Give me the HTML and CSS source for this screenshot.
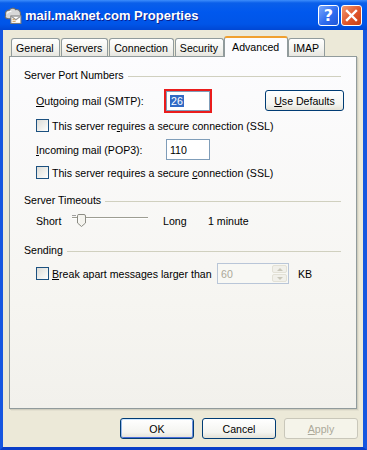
FILE: index.html
```html
<!DOCTYPE html>
<html lang="en">
<head>
  <meta charset="UTF-8">
  <title>mail.maknet.com Properties</title>
  <link rel="stylesheet" href="styles.css">
</head>
<body>

<div class="window">

  <!-- Title bar -->
  <div class="titlebar">
    <svg class="app-icon" width="18" height="17" viewBox="0 0 17 16">
      <path d="M1.5 8 C0.5 5 2.5 2.5 5 3 C6 0.5 10 0.5 11 2.5 C13.5 2 16 4 15.5 7 C16.5 8.5 15.5 11 13 11 L4 11 C1.5 11 0.5 9.5 1.5 8 Z" fill="#d8d8d8" stroke="#6b6b6b"/>
      <path d="M3 6 C4 4.5 6 4 7 4.5" fill="none" stroke="#fff"/>
      <rect x="6.5" y="8.5" width="9.5" height="7" fill="#fff" stroke="#7a7a7a"/>
      <path d="M6.5 8.5 L11.25 12 L16 8.5" fill="none" stroke="#9a9a9a"/>
      <path d="M8 11.5 L10 11.5 M8 13.5 L11 13.5" stroke="#c89040"/>
    </svg>
    <span class="title">mail.maknet.com Properties</span>
    <div class="caption-buttons">
      <span class="cap-btn help">?</span>
      <span class="cap-btn close">
        <svg width="13" height="13" viewBox="0 0 13 13">
          <path d="M2 2 L11 11 M11 2 L2 11" stroke="#fff" stroke-width="2.4" stroke-linecap="square"/>
        </svg>
      </span>
    </div>
  </div>

  <div class="frame">

    <!-- Tabs -->
    <div class="tabs">
      <span class="tab">General</span>
      <span class="tab">Servers</span>
      <span class="tab">Connection</span>
      <span class="tab">Security</span>
      <span class="tab active">Advanced</span>
      <span class="tab">IMAP</span>
    </div>

    <div class="panel">

      <div class="group-title"><span>Server Port Numbers</span></div>

      <div class="row port-row">
        <span class="field-label"><u>O</u>utgoing mail (SMTP):</span>
        <span class="textbox marked"><span class="sel">26</span></span>
        <button class="xp-btn defaults"><u>U</u>se Defaults</button>
      </div>

      <div class="row check-row">
        <span class="checkbox"></span>
        <span class="check-label">This server re<u>q</u>uires a secure connection (SSL)</span>
      </div>

      <div class="row port-row second">
        <span class="field-label"><u>I</u>ncoming mail (POP3):</span>
        <span class="textbox">110</span>
      </div>

      <div class="row check-row second">
        <span class="checkbox"></span>
        <span class="check-label">This server requires a secure <u>c</u>onnection (SSL)</span>
      </div>

      <div class="group-title timeouts"><span>Server Timeouts</span></div>

      <div class="row slider-row">
        <span class="short">Short</span>
        <svg class="slider" width="80" height="14" viewBox="0 0 80 14">
          <path d="M2 1.5 H6" stroke="#a0a0a0"/>
          <path d="M2 3.5 H78" stroke="#9d9d92"/>
          <path d="M2 4.5 H78" stroke="#ffffff"/>
          <path d="M7.5 1.5 Q7.5 0.5 9 0.5 H14 Q15.5 0.5 15.5 2 V9 L11.5 12.5 L7.5 9 Z" fill="#f4f3ee" stroke="#8c8c84"/>
          <path d="M9 8 V3" stroke="#ffffff"/>
        </svg>
        <span class="long">Long</span>
        <span>1 minute</span>
      </div>

      <div class="group-title sending"><span>Sending</span></div>

      <div class="row break-row">
        <span class="checkbox focused"></span>
        <span class="check-label break-label"><u>B</u>reak apart messages larger than</span>
        <span class="spinner">
          <span class="spin-value">60</span>
          <span class="spin-btns">
            <span class="spin up"></span>
            <span class="spin down"></span>
          </span>
        </span>
        <span class="unit">KB</span>
      </div>

    </div>

    <!-- Dialog buttons -->
    <div class="buttons">
      <button class="xp-btn default">OK</button>
      <button class="xp-btn">Cancel</button>
      <button class="xp-btn disabled"><u>A</u>pply</button>
    </div>

  </div>
</div>

</body>
</html>
```

FILE: styles.css
```css
body {
  margin: 0;
  font-family: "Liberation Sans", Arial, sans-serif;
  font-size: 10.6px;
  color: #000;
  background: #fff;
}

.window {
  width: 367px;
  height: 450px;
  display: flex;
  flex-direction: column;
}

/* Title bar */

.titlebar {
  height: 30px;
  box-sizing: border-box;
  display: flex;
  align-items: center;
  padding: 0 5px 0 4px;
  background: linear-gradient(#3d8dfb 0, #0a5fea 3px, #0058ee 40%, #0055e8 80%, #0047d4 100%);
}

.app-icon {
  display: block;
  margin-top: 1px;
}

.title {
  margin-left: 3px;
  color: #fff;
  font-weight: bold;
  font-size: 13px;
  text-shadow: 1px 1px 0 #0a1f8f;
}

.caption-buttons {
  margin-left: auto;
  display: flex;
  gap: 2px;
}

.cap-btn {
  width: 21px;
  height: 21px;
  box-sizing: border-box;
  border: 1px solid #fff;
  border-radius: 3px;
  display: flex;
  align-items: center;
  justify-content: center;
  color: #fff;
}

.help {
  background: linear-gradient(135deg, #7aa8fb, #2f6cf0 55%, #1f56d8);
  font-weight: bold;
  font-size: 16px;
  font-family: "DejaVu Sans", sans-serif;
}

.close {
  background: linear-gradient(135deg, #f29a72, #e0552a 55%, #c93f14);
}

/* Window body */

.frame {
  flex: 1;
  display: flex;
  flex-direction: column;
  background: #ece9d8;
  border-left: 3px solid #1656e0;
  border-right: 4px solid #1656e0;
  border-bottom: 3px solid #0a3ec8;
  padding: 6px 6px 0 6px;
}

.tabs {
  display: flex;
  align-items: flex-start;
  height: 21px;
  margin: 0 0 -1px 2px;
  gap: 1px;
  position: relative;
  z-index: 1;
}

.tab {
  height: 18px;
  box-sizing: border-box;
  margin-top: 2px;
  padding: 0 5px 0 4px;
  display: flex;
  align-items: center;
  border: 1px solid #919b9c;
  border-bottom: none;
  border-radius: 3px 3px 0 0;
  background: linear-gradient(#ffffff, #f3f3ef 60%, #e7e6e0);
}

.tab.active {
  height: 21px;
  margin: 0 -1px;
  padding: 0 8px 2px 7px;
  border-top: 2px solid #f0a030;
  background: #fcfcfe;
}

.panel {
  height: 353px;
  box-sizing: border-box;
  border: 1px solid #919b9c;
  box-shadow: 1px 1px 0 #d0cebf, 2px 2px 0 #e3e0d0;
  background: linear-gradient(#fcfcfe, #f6f5f1 70%, #f2f1ec);
  padding: 12px 12px 0 14px;
}

.group-title {
  display: flex;
  align-items: center;
  height: 13px;
  line-height: 13px;
}

.group-title::after {
  content: "";
  flex: 1;
  border-top: 1px solid #d0d0bf;
  margin: 1px 3px 0 4px;
}

.timeouts {
  margin-top: 15px;
}

.sending {
  margin-top: 16px;
}

.row {
  display: flex;
  align-items: center;
  padding-left: 12px;
}

.port-row {
  height: 21px;
  margin-top: 8px;
}

.port-row.second {
  margin-top: 7px;
}

.field-label {
  width: 130px;
}

.textbox {
  width: 44px;
  height: 21px;
  box-sizing: border-box;
  border: 1px solid #7f9db9;
  background: #fff;
  display: flex;
  align-items: center;
  padding-left: 3px;
}

.textbox.marked {
  height: 20px;
  outline: 2px solid #ea1c1c;
  outline-offset: 0;
  margin-top: 1px;
}

.sel {
  background: #316ac5;
  color: #fff;
  padding: 0 1px;
}

.check-row {
  height: 13px;
  margin-top: 8px;
}

.check-row.second {
  margin-top: 6px;
}

.checkbox {
  width: 13px;
  height: 13px;
  box-sizing: border-box;
  border: 1px solid #1c5180;
  background: linear-gradient(135deg, #dcdcd7, #f4f4f1 70%, #fff);
  flex: none;
}

.check-label {
  margin-left: 3px;
}

.break-label {
  width: 165px;
}

.xp-btn {
  height: 21px;
  box-sizing: border-box;
  border: 1px solid #003c74;
  border-radius: 3px;
  background: linear-gradient(#ffffff, #f4f4f0 70%, #e3e0d6);
  font-family: "Liberation Sans", Arial, sans-serif;
  font-size: 10.6px;
  color: #000;
  padding: 0;
}

.defaults {
  width: 79px;
  margin-left: auto;
}

.slider-row {
  height: 14px;
  margin-top: 7px;
}

.short {
  width: 34px;
}

.slider {
  display: block;
}

.long {
  margin-left: 13px;
  width: 45px;
}

.break-row {
  height: 21px;
  margin-top: 6px;
}

.spinner {
  width: 72px;
  height: 21px;
  box-sizing: border-box;
  border: 1px solid #b9c6d8;
  background: #f8f8f4;
  display: flex;
  align-items: center;
  padding: 1px;
}

.spin-value {
  flex: 1;
  color: #aca899;
  padding-left: 2px;
}

.spin-btns {
  width: 15px;
  height: 17px;
  display: flex;
  flex-direction: column;
  gap: 1px;
}

.spin {
  flex: 1;
  border: 1px solid #e3e1d6;
  border-radius: 2px;
  background: #f1f0ea;
  position: relative;
}

.spin::after {
  content: "";
  position: absolute;
  left: 4px;
  top: 2px;
  border-left: 3px solid transparent;
  border-right: 3px solid transparent;
}

.up::after {
  border-bottom: 3px solid #c9c7ba;
}

.down::after {
  border-top: 3px solid #c9c7ba;
}

.unit {
  margin-left: 9px;
}

/* Dialog buttons */

.buttons {
  display: flex;
  justify-content: flex-end;
  gap: 8px;
  margin: 9px -1px 0 0;
}

.buttons .xp-btn {
  width: 74px;
}

.xp-btn.default {
  box-shadow: inset 0 1px 0 #cee7ff, inset 1px 0 0 #98b8ea, inset -1px 0 0 #6a8de0, inset 0 -1px 0 #4a6ed8;
}

.xp-btn.disabled {
  border-color: #c9c7ba;
  background: #f5f4ea;
  color: #aca899;
}
```
